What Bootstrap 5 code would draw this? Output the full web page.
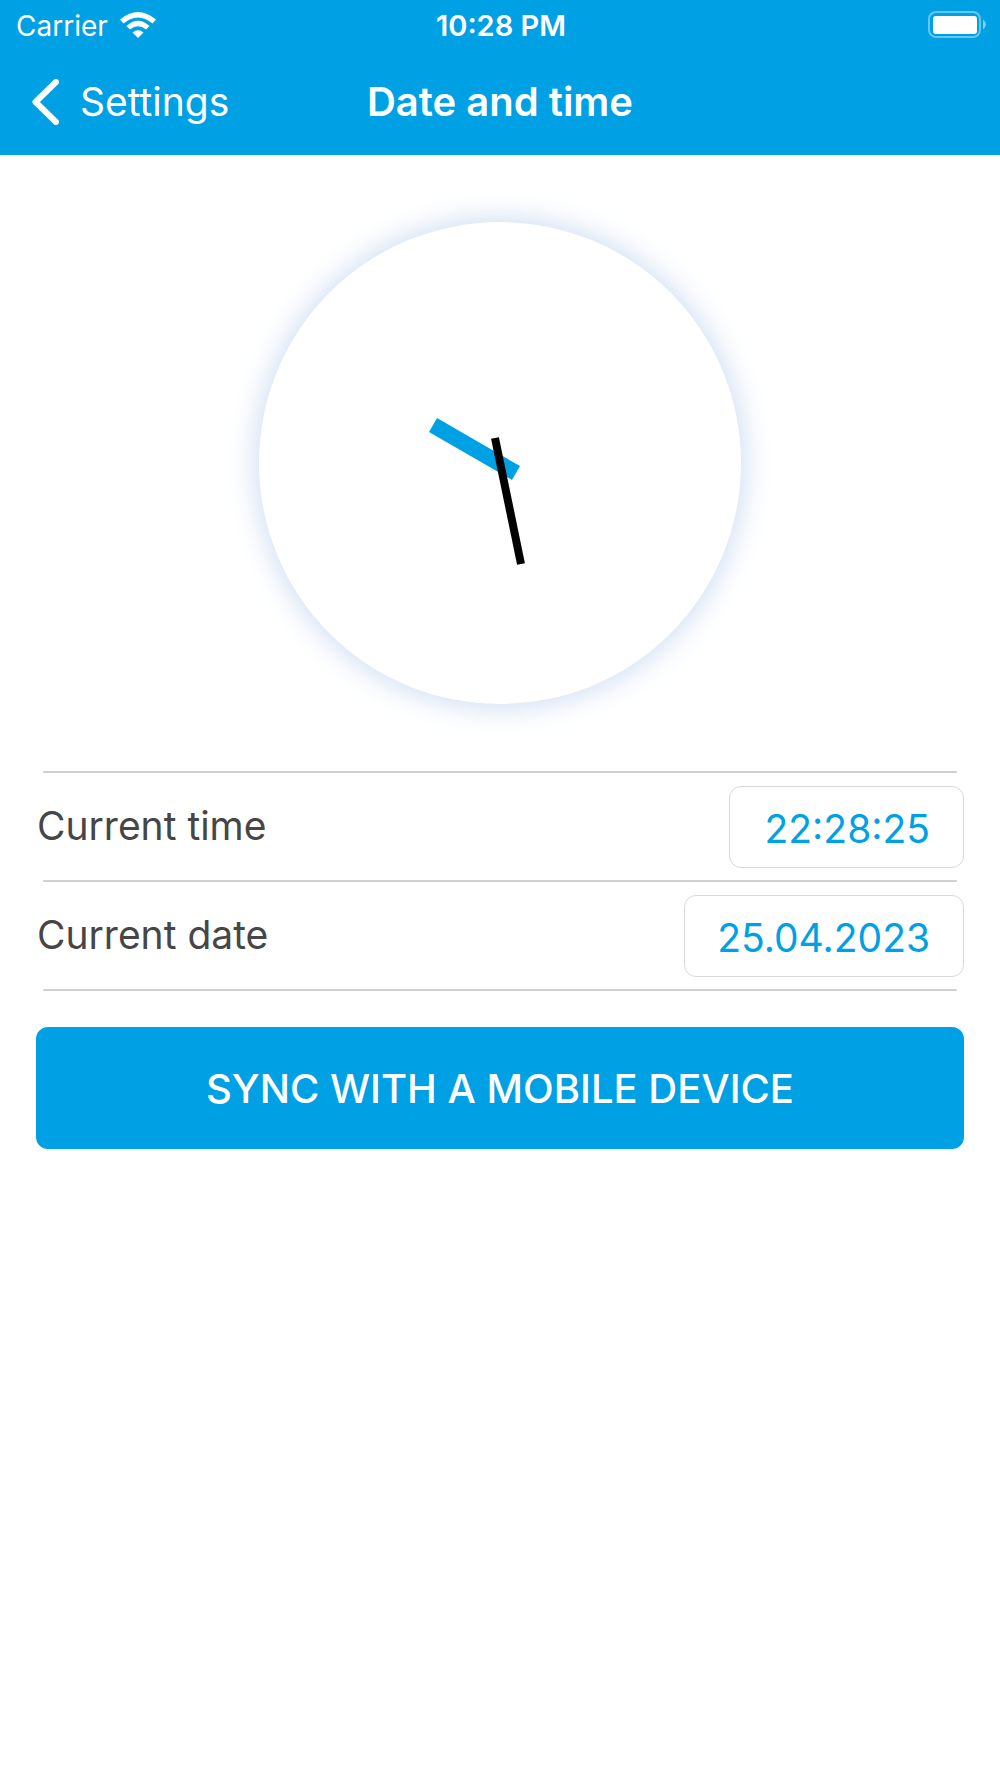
<!DOCTYPE html>
<html lang="en">
<head>
<meta charset="utf-8">
<meta name="viewport" content="width=device-width, initial-scale=1">
<title>Date and time</title>
<link rel="stylesheet" href="https://cdn.jsdelivr.net/npm/bootstrap@5.3.0/dist/css/bootstrap.min.css">
<style>
  :root { --brand: #00a0e4; --ink: #464646; --line: #d0d0d0; }
  body { font-family: Inter, "Liberation Sans", sans-serif; color: var(--ink); background: #fff; font-size: 39px; line-height: 48px; }
  .app-header { background: var(--brand); color: #fff; }
  .status-bar { height: 50px; padding: 0 14px 0 16px; font-size: 28px; line-height: 32px; }
  .status-time { font-size: 29px; }
  .status-bar span { padding-top: 1px; }
  .carrier { gap: 11px; }
  .nav-bar { height: 105px; padding: 0 32px 2px; }
  .side { flex: 1 1 0; }
  .back-link { gap: 21px; }
  .screen-title { font-size: 40px; line-height: 48px; }
  .dial { width: 482px; height: 482px; box-shadow: 0 0 32px 0 #c4d6ef; }
  .dial-area { padding: 67px 0; }
  .page { padding: 0 36px; }
  .rule { margin: 0 7px; border: 0; height: 2px; border-radius: 1px; background: var(--line); opacity: 1; }
  .setting { height: 107px; }
  .setting label { padding: 0 0 2px 1px; }
  .value-box { height: 82px; border: 1px solid #d8d8d8; border-radius: 12px; color: var(--brand); font-size: 39px; line-height: 48px; padding: 3px 33px 0 0; text-align: right; }
  .value-time { width: 235px; }
  .value-date { width: 280px; }
  .sync-btn { --bs-btn-color: #fff; --bs-btn-bg: var(--brand); --bs-btn-hover-color: #fff; --bs-btn-hover-bg: #0091cf; --bs-btn-border-width: 0; height: 122px; border-radius: 12px; font-size: 40px; font-weight: 500; margin-top: 36px; padding-top: 8px; }
</style>
</head>
<body>
<header class="app-header">
  <div class="status-bar d-flex align-items-center">
    <div class="side carrier d-flex align-items-center">
      <span>Carrier</span>
      <svg width="38" height="28" viewBox="0 0 38 28" fill="#fff" aria-hidden="true">
        <path d="M1 8.500Q19 -6.500 37 8.500L33.500 12.500Q19 .500 4.500 12.500z"/>
        <path d="M7.500 15Q19 4.500 30.500 15L27 18.500Q19 12 11 18.500z"/>
        <path d="M13.500 21.500Q19 17 24.500 21.500L19 27z"/>
      </svg>
    </div>
    <span class="status-time fw-semibold">10:28 PM</span>
    <div class="side d-flex justify-content-end">
      <svg width="58" height="28" viewBox="0 0 58 28" aria-hidden="true">
        <rect x="1" y="1" width="51" height="25" rx="7" fill="none" stroke="#fff" stroke-opacity=".4" stroke-width="2"/>
        <rect x="5" y="5" width="44" height="18" rx="3" fill="#fff"/>
        <path d="M55 8.500Q61 13.500 55 18.500z" fill="#fff" fill-opacity=".5"/>
      </svg>
    </div>
  </div>
  <nav class="nav-bar d-flex align-items-center">
    <div class="side d-flex">
      <a href="#settings" class="back-link d-flex align-items-center text-white text-decoration-none">
        <svg width="27" height="46" viewBox="0 0 27 46" fill="none" stroke="#fff" stroke-width="6" stroke-linecap="round" stroke-linejoin="round" aria-hidden="true"><path d="M24 3L3.500 23L24 43"/></svg>
        <span>Settings</span>
      </a>
    </div>
    <h1 class="screen-title m-0 fw-semibold">Date and time</h1>
    <div class="side"></div>
  </nav>
</header>
<main>
  <div class="dial-area d-flex justify-content-center">
    <svg class="dial rounded-circle" viewBox="0 0 482 482" role="img" aria-label="Analog clock">
      <path d="M174 203L257 251" stroke="#00a0e4" stroke-width="16"/>
      <path d="M236 216L262 342" stroke="#000" stroke-width="8"/>
    </svg>
  </div>
  <form class="page">
    <hr class="rule">
    <div class="setting d-flex align-items-center justify-content-between">
      <label for="time">Current time</label>
      <input id="time" class="value-box value-time bg-white" type="text" value="22:28:25">
    </div>
    <hr class="rule">
    <div class="setting d-flex align-items-center justify-content-between">
      <label for="date">Current date</label>
      <input id="date" class="value-box value-date bg-white" type="text" value="25.04.2023">
    </div>
    <hr class="rule">
    <button type="button" class="btn sync-btn w-100">SYNC WITH A MOBILE DEVICE</button>
  </form>
</main>
<script src="https://cdn.jsdelivr.net/npm/bootstrap@5.3.0/dist/js/bootstrap.bundle.min.js"></script>
</body>
</html>
